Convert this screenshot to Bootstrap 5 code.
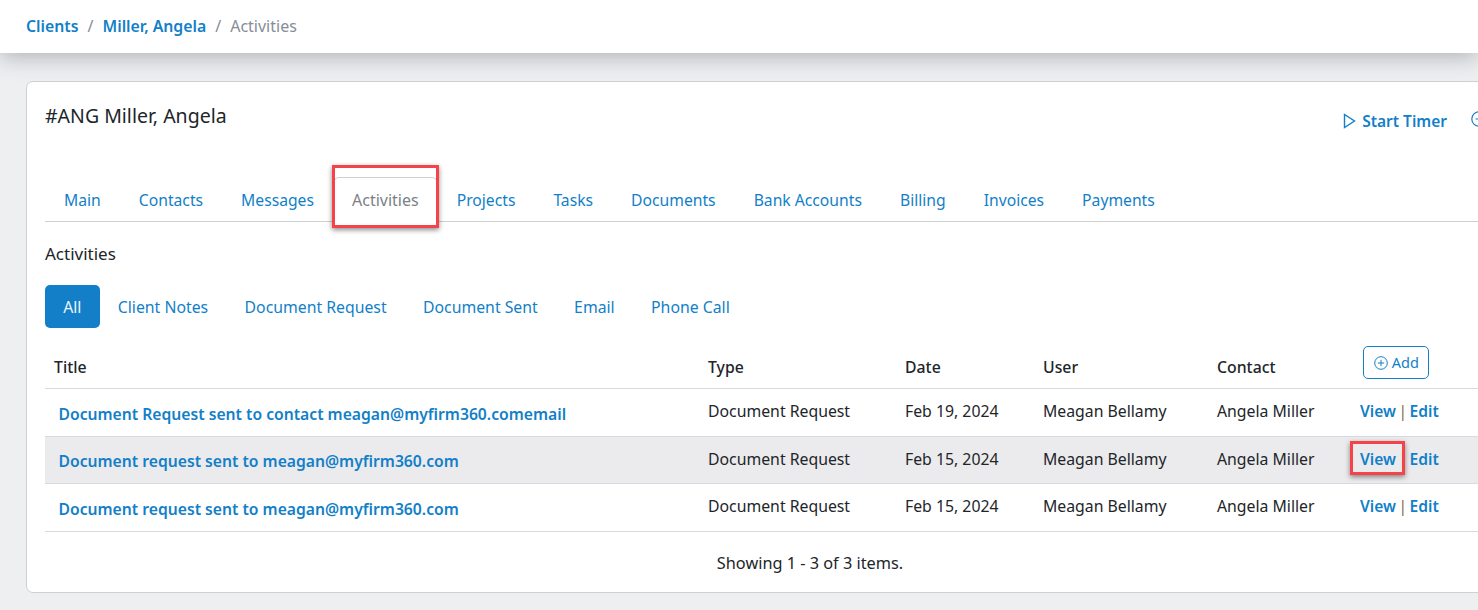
<!DOCTYPE html>
<html lang="en">
<head>
<meta charset="UTF-8">
<title>Activities</title>
<link rel="stylesheet" href="https://cdn.jsdelivr.net/npm/bootstrap@5.3.0/dist/css/bootstrap.min.css">
<style>
html, body { height: 100%; overflow: hidden; }
body { background: #eeeff1; font-family: "Noto Sans", "Open Sans", sans-serif; font-size: 15.8px; color: #212529; }
a { color: #127fc8; text-decoration: none; }

.top-bar { height: 53px; background: #fff; padding: 0 26px; box-shadow: 0 4px 22px rgba(60,64,72,.35); position: relative; }
.top-bar .breadcrumb { font-size: 16px; --bs-breadcrumb-divider-color: #868e96; --bs-breadcrumb-item-active-color: #868e96; --bs-breadcrumb-item-padding-x: 9px; }
.top-bar a { font-weight: 600; font-size: 15.8px; }

.client-card { margin: 28px 0 0 26px; width: 1576px; height: 512px; border: 1px solid #cfd0d2; border-radius: 7px; background: #fff; padding: 0 18px; }
.client-head { height: 95px; }
.client-name { font-size: 19.5px; margin: 22px 0 0; line-height: 24px; }
.head-actions { margin: 29px 0 0 auto; padding-right: 96px; font-weight: 600; font-size: 15.5px; line-height: 20px; }
.head-actions svg { flex: none; }
.timer-icon { margin-right: -2px; }

.main-tabs { height: 45px; border-color: #cfd0d2; font-size: 15.7px; }
.main-tabs .nav-link { padding: 0 18px; line-height: 44px; height: 45px; color: #127fc8; white-space: nowrap; }
.main-tabs .nav-link.active { color: #7b8187; border-color: #cfd0d2 #cfd0d2 #fff; font-size: 16px; }
.mark-box { position: absolute; border: 3px solid #f4444a; box-shadow: 0 2px 5px rgba(0,0,0,.45); pointer-events: none; }
.tab-wrap { position: relative; }
.tab-wrap .mark-box { left: -1px; right: -1px; top: -12px; bottom: -7px; }

.sect-title { font-size: 17px; line-height: 22px; margin: 21px 0 20px; }
.sub-pills { font-size: 15.8px; }
.sub-pills .nav-link { padding: 1px 18.2px 0; height: 43px; line-height: 43px; color: #127fc8; border-radius: 5px; }
.sub-pills .nav-link.active { background: #127fc8; color: #eaf4fb; }

.act-table { table-layout: fixed; width: 1530px; margin: 13px 0 0; font-size: 15.8px; --bs-table-border-color: #d9dade; }
.act-table th { font-weight: 500; font-size: 15.8px; vertical-align: middle; padding: 7px 9px 0 0; height: 47px; }
.act-table th:last-child { padding-top: 0; }
.act-table td { height: 48px; padding: 0 9px 0 0; vertical-align: middle; }
.act-table tbody tr:nth-child(2) td { height: 47px; }
.act-table tr.shade td { background: #ebebed; }
.act-table th:first-child { padding-left: 9px; }
.act-table td:first-child { padding: 5px 9px 0 13.5px; font-weight: 600; font-size: 15.7px; }
.col-title { width: 663px; }
.col-type { width: 197px; }
.col-date { width: 138px; }
.col-user { width: 174px; }
.col-contact { width: 143px; }
.act-links { font-weight: 600; font-size: 15.6px; white-space: nowrap; }
.act-links .pipe { font-weight: 400; color: #7a6a3a; padding: 0 2.5px; }
.view-wrap { position: relative; display: inline-block; }
.view-wrap .mark-box { left: -10px; right: -9px; top: -7px; bottom: -4px; }
.add-btn { --bs-btn-color: #127fc8; --bs-btn-border-color: #127fc8; --bs-btn-padding-x: 10px; --bs-btn-padding-y: 0; --bs-btn-font-size: 14.5px; --bs-btn-border-radius: 5px; height: 33px; line-height: 31px; width: 66px; margin: -3px 0 0 3px; white-space: nowrap; }
.add-btn svg { vertical-align: -2px; }
.pager-note { width: 1530px; text-align: center; font-size: 16.3px; margin: 20px 0 0; line-height: 22px; }
</style>
</head>
<body>
<div class="top-bar d-flex align-items-center">
  <nav aria-label="breadcrumb">
    <ol class="breadcrumb mb-0">
      <li class="breadcrumb-item"><a href="#">Clients</a></li>
      <li class="breadcrumb-item"><a href="#">Miller, Angela</a></li>
      <li class="breadcrumb-item active" aria-current="page">Activities</li>
    </ol>
  </nav>
</div>

<div class="client-card">
  <div class="client-head d-flex">
    <p class="client-name">#ANG Miller, Angela</p>
    <div class="head-actions d-flex align-items-start gap-4">
      <a href="#" class="d-flex align-items-center gap-2 text-nowrap">
        <svg class="timer-icon" width="13" height="16" viewBox="0 0 13 16" fill="none" stroke="#127fc8" stroke-width="1.4"><path d="M1.5 1.5v13l10-6.5z"/></svg>
        Start Timer
      </a>
      <a href="#" class="d-flex align-items-center">
        <svg width="16" height="16" viewBox="0 0 16 16" fill="none" stroke="#127fc8" stroke-width="1.2"><circle cx="8" cy="8" r="7.2"/><path d="M4.5 8h7M8 4.5v7"/></svg>
      </a>
    </div>
  </div>

  <ul class="nav nav-tabs main-tabs">
    <li class="nav-item"><a class="nav-link" href="#">Main</a></li>
    <li class="nav-item"><a class="nav-link" href="#">Contacts</a></li>
    <li class="nav-item"><a class="nav-link" href="#">Messages</a></li>
    <li class="nav-item tab-wrap"><a class="nav-link active" href="#">Activities</a><span class="mark-box"></span></li>
    <li class="nav-item"><a class="nav-link" href="#">Projects</a></li>
    <li class="nav-item"><a class="nav-link" href="#">Tasks</a></li>
    <li class="nav-item"><a class="nav-link" href="#">Documents</a></li>
    <li class="nav-item"><a class="nav-link" href="#">Bank Accounts</a></li>
    <li class="nav-item"><a class="nav-link" href="#">Billing</a></li>
    <li class="nav-item"><a class="nav-link" href="#">Invoices</a></li>
    <li class="nav-item"><a class="nav-link" href="#">Payments</a></li>
  </ul>

  <p class="sect-title">Activities</p>

  <ul class="nav nav-pills sub-pills">
    <li class="nav-item"><a class="nav-link active" href="#">All</a></li>
    <li class="nav-item"><a class="nav-link" href="#">Client Notes</a></li>
    <li class="nav-item"><a class="nav-link" href="#">Document Request</a></li>
    <li class="nav-item"><a class="nav-link" href="#">Document Sent</a></li>
    <li class="nav-item"><a class="nav-link" href="#">Email</a></li>
    <li class="nav-item"><a class="nav-link" href="#">Phone Call</a></li>
  </ul>

  <table class="table act-table">
    <colgroup>
      <col class="col-title"><col class="col-type"><col class="col-date"><col class="col-user"><col class="col-contact"><col>
    </colgroup>
    <thead>
      <tr>
        <th>Title</th><th>Type</th><th>Date</th><th>User</th><th>Contact</th>
        <th><a href="#" class="btn add-btn">
          <svg width="14" height="14" viewBox="0 0 14 14" fill="none" stroke="#127fc8" stroke-width="1"><circle cx="7" cy="7" r="6.3"/><path d="M7 3.8v6.4M3.8 7h6.4"/></svg>
          Add</a></th>
      </tr>
    </thead>
    <tbody>
      <tr>
        <td><a href="#">Document Request sent to contact meagan@myfirm360.comemail</a></td>
        <td>Document Request</td><td>Feb 19, 2024</td><td>Meagan Bellamy</td><td>Angela Miller</td>
        <td class="act-links"><a href="#">View</a><span class="pipe">|</span><a href="#">Edit</a></td>
      </tr>
      <tr class="shade">
        <td><a href="#">Document request sent to meagan@myfirm360.com</a></td>
        <td>Document Request</td><td>Feb 15, 2024</td><td>Meagan Bellamy</td><td>Angela Miller</td>
        <td class="act-links"><span class="view-wrap"><a href="#">View</a><span class="mark-box"></span></span><span class="pipe">|</span><a href="#">Edit</a></td>
      </tr>
      <tr>
        <td><a href="#">Document request sent to meagan@myfirm360.com</a></td>
        <td>Document Request</td><td>Feb 15, 2024</td><td>Meagan Bellamy</td><td>Angela Miller</td>
        <td class="act-links"><a href="#">View</a><span class="pipe">|</span><a href="#">Edit</a></td>
      </tr>
    </tbody>
  </table>

  <p class="pager-note">Showing 1 - 3 of 3 items.</p>
</div>

<script src="https://cdn.jsdelivr.net/npm/bootstrap@5.3.0/dist/js/bootstrap.bundle.min.js"></script>
</body>
</html>
